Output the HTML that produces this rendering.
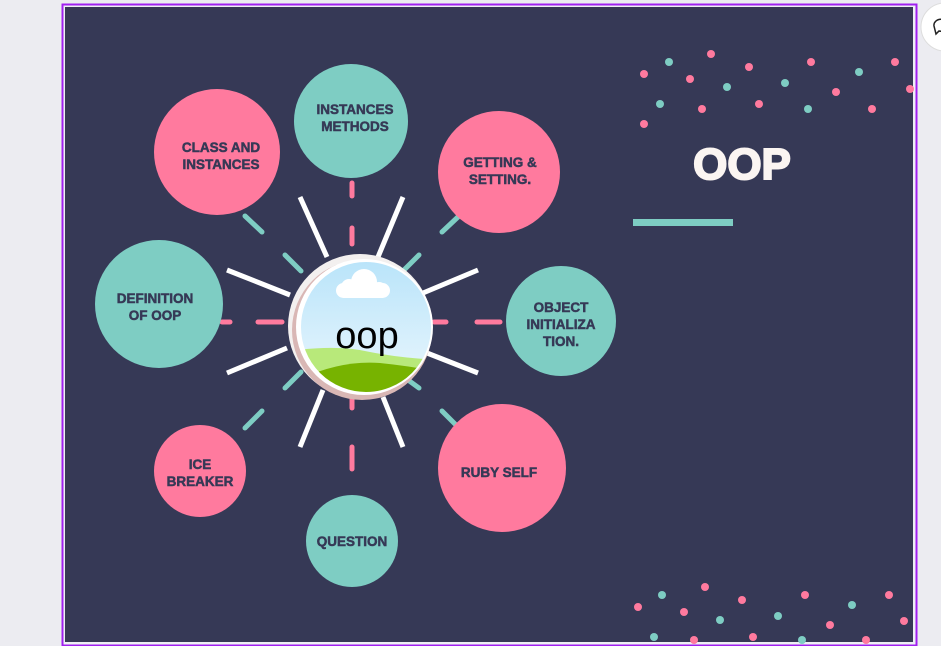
<!DOCTYPE html>
<html><head><meta charset="utf-8"><style>
body{margin:0;width:941px;height:646px;background:#ececf1;overflow:hidden;font-family:"Liberation Sans",sans-serif}
svg{position:absolute;left:0;top:0}
</style></head><body>
<svg width="941" height="646" viewBox="0 0 941 646">
<defs>
<linearGradient id="sky" x1="0" y1="0" x2="0" y2="1"><stop offset="0" stop-color="#b9e4fa"/><stop offset="1" stop-color="#eef8fd"/></linearGradient>
<clipPath id="cc"><circle cx="366" cy="327" r="66"/></clipPath>
</defs>
<rect x="62.5" y="4.5" width="854" height="641" fill="#eef0f4" stroke="#a020f0" stroke-width="2"/>
<rect x="65" y="7" width="848" height="635" fill="#363956"/>
<g fill="#ff7a9e">
<circle cx="644" cy="74" r="4"/><circle cx="690" cy="79" r="4"/><circle cx="711" cy="54" r="4"/><circle cx="749" cy="67" r="4"/><circle cx="811" cy="62" r="4"/><circle cx="836" cy="92" r="4"/><circle cx="895" cy="62" r="4"/><circle cx="910" cy="89" r="4"/><circle cx="702" cy="109" r="4"/><circle cx="759" cy="104" r="4"/><circle cx="872" cy="109" r="4"/><circle cx="644" cy="124" r="4"/>
<circle cx="638" cy="607" r="4"/><circle cx="684" cy="612" r="4"/><circle cx="705" cy="587" r="4"/><circle cx="742" cy="600" r="4"/><circle cx="805" cy="595" r="4"/><circle cx="830" cy="625" r="4"/><circle cx="889" cy="595" r="4"/><circle cx="904" cy="621" r="4"/><circle cx="694" cy="640" r="4"/><circle cx="753" cy="637" r="4"/><circle cx="866" cy="640" r="4"/>
</g>
<g fill="#7ecdc3">
<circle cx="669" cy="62" r="4"/><circle cx="727" cy="87" r="4"/><circle cx="785" cy="83" r="4"/><circle cx="859" cy="72" r="4"/><circle cx="660" cy="104" r="4"/><circle cx="808" cy="109" r="4"/>
<circle cx="662" cy="595" r="4"/><circle cx="720" cy="620" r="4"/><circle cx="778" cy="616" r="4"/><circle cx="852" cy="605" r="4"/><circle cx="654" cy="637" r="4"/><circle cx="802" cy="640" r="4"/>
</g>
<rect x="633" y="219" width="100" height="7" fill="#7ecdc3"/>
<text x="742" y="179" font-size="44" font-weight="bold" fill="#fbf5f2" stroke="#fbf5f2" stroke-width="2" text-anchor="middle">OOP</text>
<g stroke="#ffffff" stroke-width="5">
<line x1="300" y1="197" x2="327" y2="257"/><line x1="403" y1="197" x2="378" y2="257"/>
<line x1="227" y1="270" x2="290" y2="295"/><line x1="478" y1="270" x2="423" y2="293"/>
<line x1="227" y1="373" x2="287" y2="348"/><line x1="478" y1="373" x2="427" y2="353"/>
<line x1="300" y1="447" x2="323" y2="390"/><line x1="403" y1="447" x2="383" y2="397"/>
</g>
<g stroke="#ff7a9e" stroke-width="5" stroke-linecap="round">
<line x1="352" y1="183" x2="352" y2="196"/><line x1="352" y1="228" x2="352" y2="244"/>
<line x1="352" y1="385" x2="352" y2="408"/><line x1="352" y1="447" x2="352" y2="469"/>
<line x1="222" y1="322" x2="230" y2="322"/><line x1="258" y1="322" x2="282" y2="322"/>
<line x1="434" y1="322" x2="446" y2="322"/><line x1="477" y1="322" x2="500" y2="322"/>
</g>
<g stroke="#7ecdc3" stroke-width="5" stroke-linecap="round">
<line x1="245" y1="216" x2="262" y2="232"/><line x1="285" y1="255" x2="301" y2="271"/>
<line x1="459" y1="216" x2="442" y2="232"/><line x1="419" y1="255" x2="403" y2="271"/>
<line x1="245" y1="428" x2="262" y2="411"/><line x1="285" y1="388" x2="301" y2="372"/>
<line x1="459" y1="428" x2="442" y2="411"/><line x1="419" y1="388" x2="408" y2="380"/>
</g>
<circle cx="360" cy="326" r="72" fill="#f3f0ef"/>
<circle cx="362" cy="330" r="70" fill="#d9b7b5"/>
<circle cx="364" cy="327" r="68" fill="#ffffff"/>
<g clip-path="url(#cc)">
<rect x="298" y="260" width="140" height="140" fill="url(#sky)"/>
<path d="M298 350 Q340 345 370 352 Q400 358 440 360 L440 400 L298 400Z" fill="#b8e97a"/>
<path d="M298 380 Q340 360 380 363 Q410 366 440 372 L440 400 L298 400Z" fill="#77b300"/>
</g>
<circle cx="366" cy="327" r="66" fill="none" stroke="#fff" stroke-width="2"/>
<g fill="#fff"><rect x="336" y="283" width="54" height="15" rx="7.5"/><circle cx="364" cy="282" r="13"/><circle cx="349" cy="287" r="8"/><circle cx="379" cy="290" r="8"/></g>
<text x="367" y="348" font-size="38" fill="#000" text-anchor="middle">oop</text>
<circle cx="217" cy="152" r="63" fill="#ff7a9e"/>
<circle cx="351" cy="121" r="57" fill="#7ecdc3"/>
<circle cx="499" cy="172" r="61" fill="#ff7a9e"/>
<circle cx="561" cy="321" r="55" fill="#7ecdc3"/>
<circle cx="502" cy="468" r="64" fill="#ff7a9e"/>
<circle cx="352" cy="541" r="46" fill="#7ecdc3"/>
<circle cx="200" cy="471" r="46" fill="#ff7a9e"/>
<circle cx="159" cy="304" r="64" fill="#7ecdc3"/>
<g font-size="13.5" font-weight="bold" fill="#363956" stroke="#363956" stroke-width="0.5" text-anchor="middle">
<text x="221" y="152">CLASS AND</text><text x="221" y="169">INSTANCES</text>
<text x="355" y="114">INSTANCES</text><text x="355" y="131">METHODS</text>
<text x="500" y="167">GETTING &amp;</text><text x="500" y="184">SETTING.</text>
<text x="561" y="312">OBJECT</text><text x="561" y="329">INITIALIZA</text><text x="561" y="346">TION.</text>
<text x="499" y="477">RUBY SELF</text>
<text x="352" y="546">QUESTION</text>
<text x="200" y="469">ICE</text><text x="200" y="486">BREAKER</text>
<text x="155" y="303">DEFINITION</text><text x="155" y="320">OF OOP</text>
</g>
<circle cx="945" cy="27" r="24" fill="#fff" stroke="#ddd"/>
<path d="M934 26 a7 6 0 1 1 5 5 l-3 3 z" fill="none" stroke="#222" stroke-width="1.5"/>
</svg>
</body></html>
